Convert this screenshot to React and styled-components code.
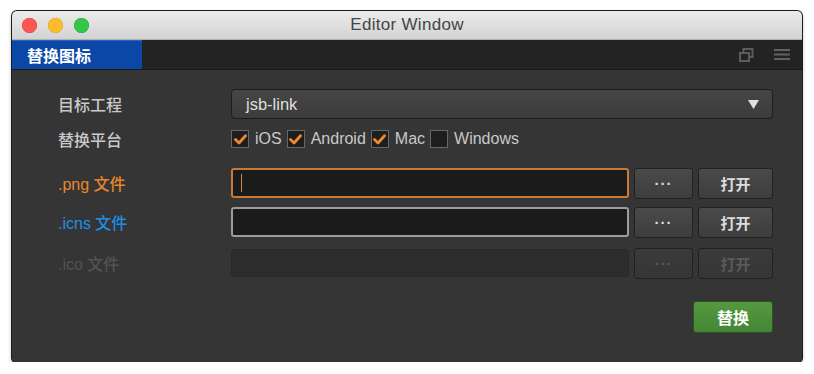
import styled, { createGlobalStyle } from "styled-components";

const GlobalStyle = createGlobalStyle`
  html, body {
    margin: 0;
    background: #ffffff;
  }
  body {
    font-family: "Liberation Sans", "Noto Sans CJK SC", sans-serif;
  }
`;

const Page = styled.div`
  padding: 11px 0 0 12px;
`;

const Window = styled.div`
  width: 790px;
  height: 351px;
  display: flex;
  flex-direction: column;
  background: #353535;
  border-radius: 5px 5px 4px 4px;
  box-shadow: 0 0 0 1px #1c1c1c, 0 2px 4px rgba(0, 0, 0, 0.35);
  overflow: hidden;
`;

const TitleBar = styled.div`
  position: relative;
  height: 29px;
  display: flex;
  align-items: center;
  justify-content: center;
  background: linear-gradient(#ebebeb, #d3d3d3);
  border-bottom: 1px solid #b0b0b0;
  box-sizing: border-box;
`;

const Lights = styled.div`
  position: absolute;
  left: 10px;
  top: 7px;
  display: flex;
  gap: 11px;
`;

const Light = styled.span`
  width: 15px;
  height: 15px;
  border-radius: 50%;
  background: ${(p) => p.$color};
  box-shadow: inset 0 0 0 0.5px ${(p) => p.$edge};
`;

const Title = styled.div`
  font-size: 17px;
  color: #454545;
  letter-spacing: 0.3px;
`;

const TabBar = styled.div`
  height: 30px;
  display: flex;
  align-items: stretch;
  background: #232323;
  border-bottom: 1px solid #1a1a1a;
  box-sizing: border-box;
`;

const Tab = styled.div`
  width: 130px;
  display: flex;
  align-items: center;
  padding-left: 15px;
  box-sizing: border-box;
  background: #0b47a6;
  color: #ffffff;
  font-size: 16px;
  font-weight: bold;
  border-top: 1px solid #2a64c0;
`;

const TabTools = styled.div`
  margin-left: auto;
  display: flex;
  align-items: center;
  gap: 20px;
  padding-right: 12px;
`;

const Content = styled.div`
  flex: 1;
  display: flex;
  flex-direction: column;
  padding: 19px 29px 0 46px;
`;

const Row = styled.div`
  height: 30px;
  margin-top: ${(p) => p.$top || 0}px;
  display: flex;
  align-items: center;
`;

const Label = styled.div`
  width: 173px;
  flex: none;
  font-size: 16px;
  font-weight: 500;
  color: ${(p) => p.$color || "#c9c9c9"};
`;

const Select = styled.div`
  flex: 1;
  height: 30px;
  display: flex;
  align-items: center;
  justify-content: space-between;
  padding: 0 13px 0 14px;
  box-sizing: border-box;
  background: linear-gradient(#464646, #3c3c3c);
  border: 1px solid #1d1d1d;
  border-radius: 4px;
  color: #dedede;
  font-size: 16.5px;
`;

const Checks = styled.div`
  display: flex;
  align-items: center;
`;

const CheckItem = styled.label`
  display: flex;
  align-items: center;
  gap: 6px;
  margin-right: 5px;
  font-size: 16px;
  color: #c9c9c9;
`;

const Box = styled.span`
  width: 18px;
  height: 18px;
  box-sizing: border-box;
  display: flex;
  align-items: center;
  justify-content: center;
  background: #1e1e1e;
  border: 1px solid #686868;
`;

const Field = styled.div`
  position: relative;
  flex: 1;
  height: ${(p) => (p.$disabled ? 28 : 30)}px;
  box-sizing: border-box;
  border-radius: 3px;
  background: ${(p) => (p.$disabled ? "#2d2d2d" : "#1b1b1b")};
  border: ${(p) =>
    p.$focus ? "2px solid #c97a34" : p.$disabled ? "1px solid #292929" : "2px solid #9c9c9c"};
`;

const Caret = styled.span`
  position: absolute;
  left: 8px;
  top: 4px;
  width: 1px;
  height: 18px;
  background: #d08a4a;
`;

const Button = styled.button`
  height: 31px;
  width: ${(p) => p.$w}px;
  margin-left: 5px;
  padding: 0;
  border: 1px solid #212121;
  border-radius: 3px;
  background: ${(p) =>
    p.$disabled ? "linear-gradient(#3b3b3b, #353535)" : "linear-gradient(#4a4a4a, #3d3d3d)"};
  color: ${(p) => (p.$disabled ? "#5a5a5a" : "#dcdcdc")};
  font-family: "Liberation Sans", "Noto Sans CJK SC", sans-serif;
  font-size: 15px;
  font-weight: bold;
  letter-spacing: ${(p) => (p.$dots ? "1px" : "0")};
`;

const Footer = styled.div`
  margin-top: 23px;
  display: flex;
  justify-content: flex-end;
`;

const PrimaryButton = styled.button`
  width: 80px;
  height: 32px;
  padding: 0;
  border: 1px solid #2c5320;
  border-radius: 3px;
  background: linear-gradient(#54993f, #458636);
  color: #ffffff;
  font-family: "Liberation Sans", "Noto Sans CJK SC", sans-serif;
  font-size: 16px;
  font-weight: bold;
`;

const CheckMark = () => (
  <svg width="13" height="11" viewBox="0 0 13 11">
    <polyline
      points="1.5,5.5 5,9 11.5,1.8"
      fill="none"
      stroke="#ef8a2c"
      strokeWidth="2.8"
      strokeLinecap="round"
      strokeLinejoin="round"
    />
  </svg>
);

const platforms = [
  { name: "iOS", checked: true },
  { name: "Android", checked: true },
  { name: "Mac", checked: true },
  { name: "Windows", checked: false },
];

const files = [
  { label: ".png 文件", color: "#e8862c", focus: true, top: 14 },
  { label: ".icns 文件", color: "#1f8fe6", top: 9 },
  { label: ".ico 文件", color: "#525252", disabled: true, top: 11 },
];

const App = () => {
  return (
    <Page>
      <GlobalStyle />
      <Window>
        <TitleBar>
          <Lights>
            <Light $color="#fc5753" $edge="#de3f3a" />
            <Light $color="#fdbc2e" $edge="#dea025" />
            <Light $color="#33c748" $edge="#27aa35" />
          </Lights>
          <Title>Editor Window</Title>
        </TitleBar>
        <TabBar>
          <Tab>替换图标</Tab>
          <TabTools>
            <svg width="15" height="14" viewBox="0 0 15 14">
              <rect x="4.5" y="1" width="9" height="8" fill="none" stroke="#5c5c5c" strokeWidth="2" />
              <rect x="1" y="5" width="9" height="8" fill="#232323" stroke="#5c5c5c" strokeWidth="2" />
            </svg>
            <svg width="16" height="11" viewBox="0 0 16 11">
              <rect x="0" y="0" width="16" height="2" fill="#626262" />
              <rect x="0" y="4.5" width="16" height="2" fill="#626262" />
              <rect x="0" y="9" width="16" height="2" fill="#626262" />
            </svg>
          </TabTools>
        </TabBar>
        <Content>
          <Row>
            <Label>目标工程</Label>
            <Select>
              <span>jsb-link</span>
              <svg width="11" height="9" viewBox="0 0 11 9">
                <polygon points="0,0 11,0 5.5,9" fill="#e0e0e0" />
              </svg>
            </Select>
          </Row>
          <Row $top={5}>
            <Label>替换平台</Label>
            <Checks>
              {platforms.map((p) => (
                <CheckItem key={p.name}>
                  <Box>{p.checked && <CheckMark />}</Box>
                  {p.name}
                </CheckItem>
              ))}
            </Checks>
          </Row>
          {files.map((f) => (
            <Row key={f.label} $top={f.top}>
              <Label $color={f.color}>{f.label}</Label>
              <Field $focus={f.focus} $disabled={f.disabled}>
                {f.focus && <Caret />}
              </Field>
              <Button $w={59} $dots $disabled={f.disabled}>
                ···
              </Button>
              <Button $w={75} $disabled={f.disabled}>
                打开
              </Button>
            </Row>
          ))}
          <Footer>
            <PrimaryButton>替换</PrimaryButton>
          </Footer>
        </Content>
      </Window>
    </Page>
  );
};

export default App;
